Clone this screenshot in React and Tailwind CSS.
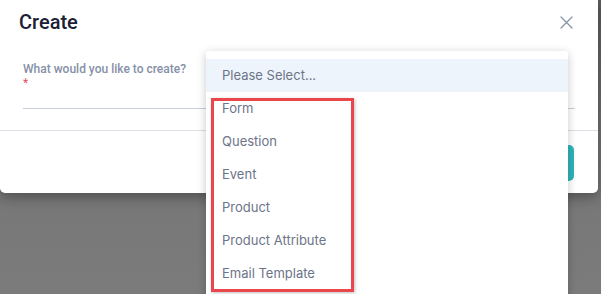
import React from 'react';

const options = ['Form', 'Question', 'Event', 'Product', 'Product Attribute', 'Email Template'];

export default function App() {
  return (
    <div
      className="relative w-[601px] h-[294px] overflow-hidden bg-gradient-to-b from-[#5c5c5c] via-[#767676] to-[#7b7b7b]"
      style={{ fontFamily: 'Roboto, "Noto Sans", sans-serif' }}
    >
      {/* Modal */}
      <div className="w-[598px] h-[193px] bg-white rounded-b-[5px] flex flex-col shadow-[0_4px_14px_rgba(0,0,0,0.35)]">
        <div className="flex items-start justify-between pl-[19px] pr-[25px] pt-[9px] h-[44px]">
          <h2 className="text-[20px] leading-[26px] font-medium text-[#1b2036]">Create</h2>
          <svg width="13" height="13" viewBox="0 0 13 13" className="mt-[7px]">
            <path d="M1 1L12 12M12 1L1 12" stroke="#8793a8" strokeWidth="1.3" strokeLinecap="round" />
          </svg>
        </div>
        <div className="pl-[23px] pr-[23px] pt-[19px] h-[87px] border-b border-[#dcdfe5]">
          <p className="text-[12px] leading-[13px] font-medium text-[#8690a8]">What would you like to create?</p>
          <p className="mt-[3px] text-[12px] leading-[9px] text-[#e3505e]">*</p>
          <div className="mt-[20px] border-b border-[#c9cfda]" />
        </div>
        <div className="flex justify-end pr-[24px] pt-[14px]">
          <div className="w-[80px] h-[36px] rounded-[5px] bg-[#2db4b8]" />
        </div>
      </div>

      {/* Dropdown */}
      <div
        className="absolute left-[206px] top-[51px] w-[362px] h-[260px] bg-white rounded-[3px] pt-[8px] shadow-[0_2px_10px_rgba(0,0,0,0.22)]"
        style={{ fontFamily: 'Inter, Roboto, sans-serif' }}
      >
        <div className="h-[33px] flex items-center pl-[16px] bg-[#eef4fb] text-[13px] text-[#6c7488]">
          Please Select...
        </div>
        {options.map((o) => (
          <div key={o} className="h-[33px] flex items-center pl-[16px] pt-[1px] text-[13px] text-[#6c7488]">
            {o}
          </div>
        ))}
      </div>

      {/* Annotation */}
      <div className="absolute left-[211px] top-[98px] w-[143px] h-[194px] border-[3px] border-[#e9474c] shadow-[1px_1px_3px_rgba(0,0,0,0.25)]" />
    </div>
  );
}
